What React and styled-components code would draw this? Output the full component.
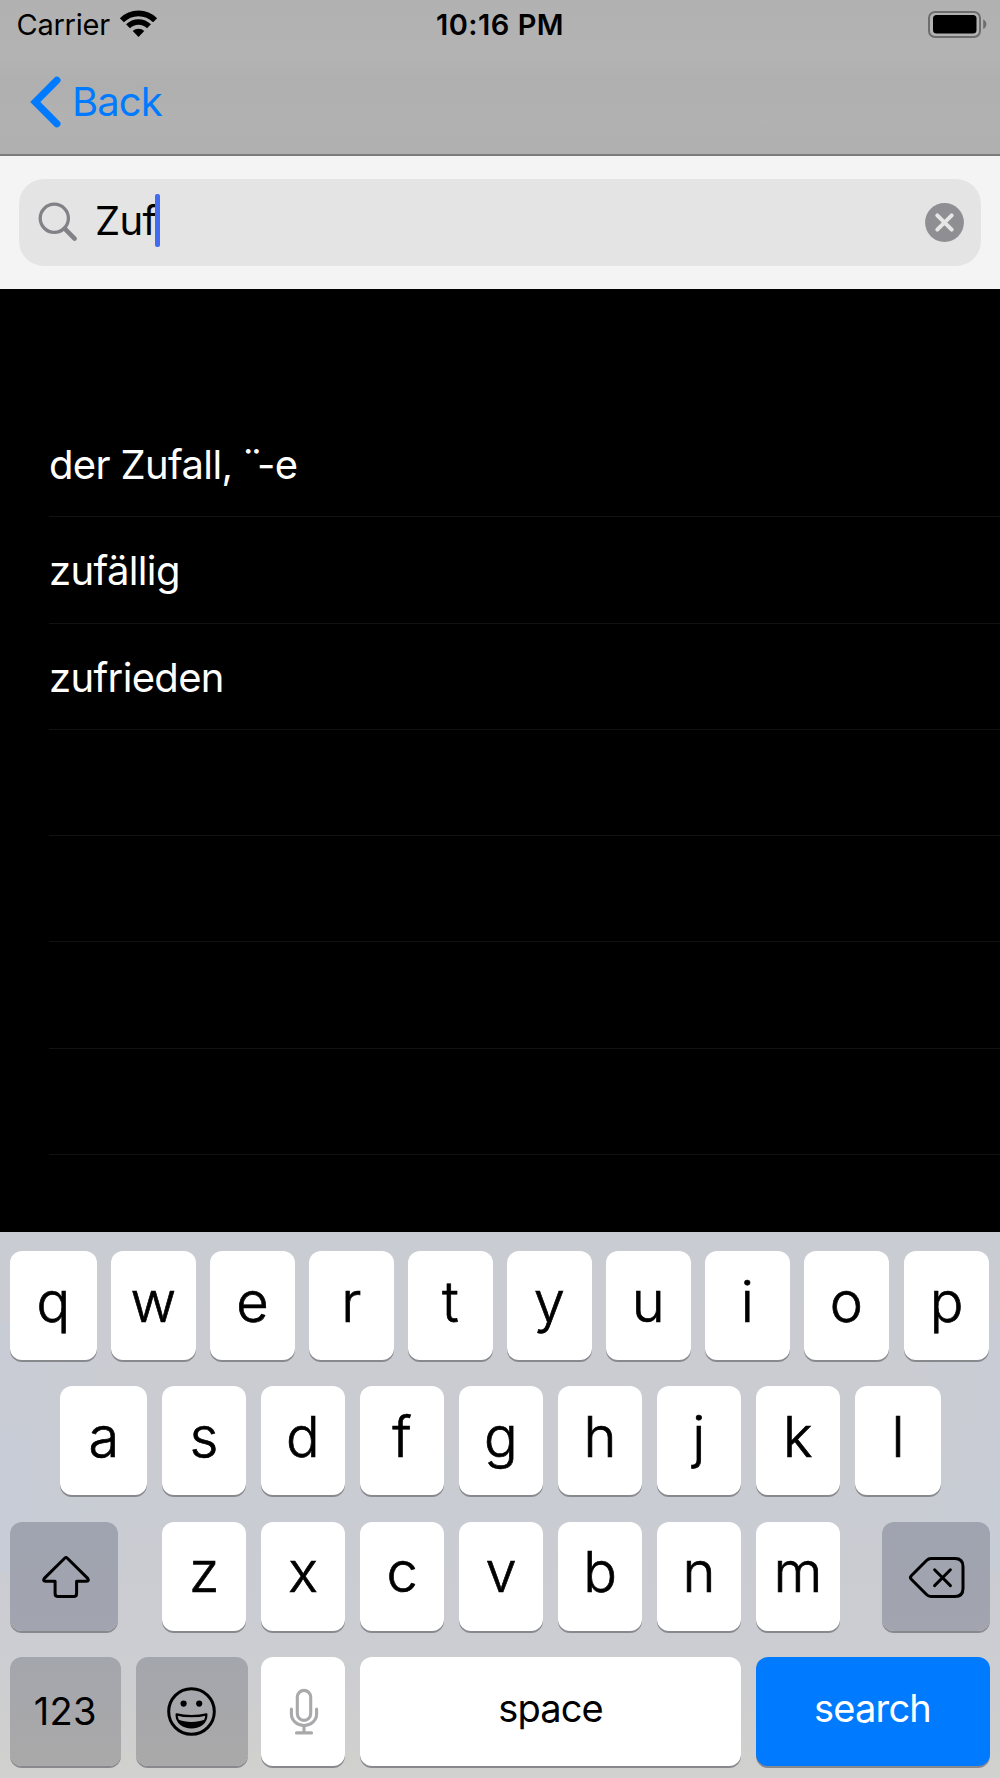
import React from "react";
import styled, { createGlobalStyle } from "styled-components";

const GlobalStyle = createGlobalStyle`
  *, *::before, *::after { box-sizing: border-box; }
  body { margin: 0; background: #000; }
`;

const Screen = styled.div`
  width: 1000px;
  height: 1778px;
  display: flex;
  flex-direction: column;
  overflow: hidden;
  background: #000;
  color: #000;
  font-family: Inter, "Liberation Sans", sans-serif;
  svg { display: block; flex: none; overflow: visible; }
`;

const Text = styled.span`
  display: block;
  white-space: pre;
  font-size: ${(p) => p.$size}px;
  line-height: ${(p) => p.$line || 48}px;
  font-weight: ${(p) => p.$weight || 400};
  letter-spacing: ${(p) => p.$track || 0}px;
  color: ${(p) => p.$color || "#000"};
`;

const Letter = styled(Text)`
  -webkit-text-stroke: 0.7px #000;
`;

const Header = styled.header`
  height: 156px;
  flex: none;
  border-bottom: 2px solid #7b7b7b;
  background: linear-gradient(#b1b1b1 0%, #b3b3b3 38%, #afafaf 55%, #b2b2b2 78%, #afafaf 100%);
`;

const StatusBar = styled.div`
  height: 48px;
  display: grid;
  grid-template-columns: 1fr auto 1fr;
  padding: 0 13px;
`;

const Carrier = styled.div`
  display: flex;
  gap: 10px;
  padding: 1px 0 0 3.5px;
  svg { margin-top: 9px; }
`;

const Clock = styled.div`
  padding-top: 1px;
`;

const Battery = styled.div`
  display: flex;
  justify-content: flex-end;
  padding-top: 11px;
`;

const BackButton = styled.button`
  display: flex;
  align-items: center;
  gap: 11px;
  height: 58px;
  margin: 25px 0 0 29px;
  padding: 0;
  border: 0;
  background: none;
  font: inherit;
`;

const SearchBar = styled.div`
  height: 133px;
  flex: none;
  padding: 23px 19px 0 19px;
  background: #f4f4f4;
`;

const SearchField = styled.div`
  height: 87px;
  display: flex;
  align-items: center;
  padding: 0 17px 0 19px;
  border-radius: 25px;
  background: #e4e4e4;
`;

const Query = styled.div`
  flex: 1;
  display: flex;
  align-items: center;
  padding: 0 0 3px 17px;
`;

const Caret = styled.span`
  width: 5px;
  height: 53px;
  margin: 0 0 2px -2px;
  border-radius: 2px;
  background: #416bf0;
`;

const Results = styled.ul`
  flex: 1;
  min-height: 0;
  margin: 0;
  padding: 122px 0 0 48.5px;
  list-style: none;
  overflow: hidden;
`;

const Result = styled.li`
  height: 106.3px;
  display: flex;
  align-items: center;
  padding: 3px 0 0 0.5px;
  border-bottom: 1px solid #121212;
`;

const Umlaut = styled.span`
  margin-left: -2.5px;
  letter-spacing: -7px;
`;

const Keyboard = styled.div`
  height: 546px;
  flex: none;
  display: flex;
  flex-direction: column;
  gap: 24.3px;
  padding: 19px 10px 0;
  background:
    linear-gradient(90deg, rgba(196, 204, 222, 0.35), rgba(196, 204, 222, 0) 14%, rgba(196, 204, 222, 0) 88%, rgba(196, 204, 222, 0.3)) 0 90px / 100% 250px no-repeat,
    linear-gradient(#c9ccd2 0%, #cbccd1 28%, #c9ccd2 50%, #cccdd2 76%, #cfcfcf 92%, #d1d1cf 100%);
`;

const KeyRow = styled.div`
  height: 111px;
  display: flex;
  gap: 14.3px;
  padding-left: ${(p) => p.$indent || 0}px;
`;

const tones = {
  light: "#fff",
  cool: "linear-gradient(#9fa4b0, #a2a4af)",
  warm: "linear-gradient(#a4a6ad, #aaa9a9)",
  action: "#007aff",
};

const Key = styled.button`
  width: ${(p) => p.$w || 84.7}px;
  height: 109px;
  flex: none;
  display: flex;
  justify-content: center;
  align-items: center;
  margin: 0 0 0 ${(p) => p.$ml || 0}px;
  padding: ${(p) => p.$drop || 0}px 0 ${(p) => p.$lift || 0}px ${(p) => p.$push || 0}px;
  border: 0;
  border-radius: 12px;
  background: ${(p) => tones[p.$tone || "light"]};
  box-shadow: 0 2px 0 #88898d;
  font: inherit;
`;

const letterTop = ["q", "w", "e", "r", "t", "y", "u", "i", "o", "p"];
const letterHome = ["a", "s", "d", "f", "g", "h", "j", "k", "l"];
const letterLow = ["z", "x", "c", "v", "b", "n", "m"];

function Letters({ letters, first, last }) {
  return letters.map((ch, i) => {
    const isLast = i === letters.length - 1;
    return (
      <Key
        key={ch}
        $w={i === 0 ? first : isLast ? last : undefined}
        $ml={isLast && last ? 0.8 : 0}
        $lift={8}
      >
        <Letter $size={56} $line={70} $weight={300}>{ch}</Letter>
      </Key>
    );
  });
}

function WifiIcon() {
  return (
    <svg width="37" height="27" viewBox="0 0 37 27">
      <g fill="none" stroke="#000">
        <path d="M1.9 10.2A23.5 23.5 0 0 1 35.1 10.2" strokeWidth="5.7" />
        <path d="M8 16.3A14.9 14.9 0 0 1 29 16.3" strokeWidth="5.5" />
      </g>
      <path d="M12.7 21A8.3 8.3 0 0 1 24.3 21L18.5 26.9Z" />
    </svg>
  );
}

function BatteryIcon() {
  return (
    <svg width="59" height="27" viewBox="0 0 59 27">
      <rect x="1" y="1" width="51" height="25" rx="6" fill="none" stroke="#6d6d6d" strokeWidth="2" />
      <rect x="5" y="4" width="43.5" height="18.5" rx="3.5" />
      <path d="M55.2 8.5C59.4 10 59.4 16.5 55.2 18Z" fill="#6d6d6d" />
    </svg>
  );
}

function ChevronIcon() {
  return (
    <svg width="32" height="52" viewBox="0 0 32 52">
      <path d="M27.9 4.2L6.3 26L27.9 47.8" fill="none" stroke="#007aff" strokeWidth="7.2" strokeLinecap="round" />
    </svg>
  );
}

function SearchIcon() {
  return (
    <svg width="40" height="40" viewBox="0 0 40 40">
      <g fill="none" stroke="#828286" strokeLinecap="round">
        <circle cx="16.3" cy="15.3" r="14.1" strokeWidth="3.3" />
        <path d="M26.7 25.7L36.6 35.6" strokeWidth="4.6" />
      </g>
    </svg>
  );
}

function ClearIcon() {
  return (
    <svg width="39" height="39" viewBox="0 0 39 39">
      <circle cx="19.5" cy="19.5" r="19.4" fill="#8e8e93" />
      <path d="M12.3 12.3L26.7 26.7M26.7 12.3L12.3 26.7" stroke="#e6e6e6" strokeWidth="4" strokeLinecap="round" />
    </svg>
  );
}

function ShiftIcon() {
  return (
    <svg width="48" height="42" viewBox="0 0 48 42">
      <path
        d="M22.9 2Q24 1 25.1 2L45.7 22.4Q47.5 25.2 44.5 25.2H34.6V37.5Q34.6 40.6 31.5 40.6H16.2Q13.1 40.6 13.1 37.5V25.2H3.5Q.5 25.2 2.3 22.4Z"
        fill="none" stroke="#000" strokeWidth="3" strokeLinejoin="round"
      />
    </svg>
  );
}

function DeleteIcon() {
  return (
    <svg width="56" height="41" viewBox="0 0 56 41">
      <g fill="none" stroke="#000" strokeWidth="3" strokeLinecap="round" strokeLinejoin="round">
        <path d="M22 1.5H46Q54 1.5 54 9.5V31.5Q54 39.5 46 39.5H22Q19.5 39.5 17.5 37.5L2.3 22.2Q.6 20.5 2.3 18.8L17.5 3.5Q19.5 1.5 22 1.5Z" />
        <path d="M25.6 12.8L41.4 28.6M41.4 12.8L25.6 28.6" />
      </g>
    </svg>
  );
}

function SmileIcon() {
  return (
    <svg width="49" height="49" viewBox="0 0 49 49">
      <circle cx="24.5" cy="24.5" r="22.8" fill="none" stroke="#000" strokeWidth="3" />
      <circle cx="16.6" cy="16.6" r="3.1" />
      <circle cx="32.2" cy="16.6" r="3.1" />
      <path d="M9.6 27.4C18 29.8 31 29.8 39.4 27.4C39.4 36 32.500 40.300 24.500 40.300C16.500 40.300 9.600 36 9.600 27.400Z" fill="none" stroke="#000" strokeWidth="2.200" strokeLinejoin="round" />
      <path d="M11 32.500C18.500 35.700 30.500 35.700 38 32.500C35.500 38.300 30.500 41 24.500 41C18.500 41 13.500 38.300 11 32.500Z" />
    </svg>
  );
}

function MicIcon() {
  return (
    <svg width="28" height="46" viewBox="0 0 28 46">
      <g fill="none" stroke="#a9a9ab" strokeWidth="3.1" strokeLinecap="round">
        <rect x="7.3" y="1.4" width="13.4" height="30" rx="6.7" />
        <path d="M1.4 20V25A12.6 11.6 0 0 0 26.6 25V20M14 37V43.8M6.5 43.9H21.5" />
      </g>
    </svg>
  );
}

const entries = [
  { label: <>der Zufall, <Umlaut>¨</Umlaut>-e</> },
  { label: "zufällig" },
  { label: "zufrieden" },
  {},
  {},
  {},
  {},
  {},
];

export default function App() {
  return (
    <Screen>
      <GlobalStyle />
      <Header>
        <StatusBar>
          <Carrier>
            <Text $size={29} $track={-0.25}>Carrier</Text>
            <WifiIcon />
          </Carrier>
          <Clock>
            <Text $size={29} $weight={600} $track={0.5}>10:16 PM</Text>
          </Clock>
          <Battery>
            <BatteryIcon />
          </Battery>
        </StatusBar>
        <BackButton>
          <ChevronIcon />
          <Text $size={40} $track={-0.9} $color="#007aff">Back</Text>
        </BackButton>
      </Header>
      <SearchBar>
        <SearchField>
          <SearchIcon />
          <Query>
            <Text $size={40} $track={-0.7}>Zuf</Text>
            <Caret />
          </Query>
          <ClearIcon />
        </SearchField>
      </SearchBar>
      <Results>
        {entries.map((entry, i) => (
          <Result key={i}>
            <Text $size={40} $track={-0.65} $color="#fff">{entry.label}</Text>
          </Result>
        ))}
      </Results>
      <Keyboard>
        <KeyRow>
          <Letters letters={letterTop} first={86.8} last={85.7} />
        </KeyRow>
        <KeyRow $indent={50.3}>
          <Letters letters={letterHome} first={87} last={85.7} />
        </KeyRow>
        <KeyRow>
          <Key $w={108} $tone="cool" $drop={2.6} $push={3}><ShiftIcon /></Key>
          <Key $ml={29.5} $lift={8}>
            <Letter $size={56} $line={70} $weight={300}>{letterLow[0]}</Letter>
          </Key>
          <Letters letters={letterLow.slice(1)} />
          <Key $w={108} $ml={27.3} $tone="cool" $drop={2.4} $push={1.5}><DeleteIcon /></Key>
        </KeyRow>
        <KeyRow>
          <Key $w={110.7} $tone="warm">
            <Text $size={38} $track={0.4}>123</Text>
          </Key>
          <Key $w={111.7} $ml={1} $tone="warm"><SmileIcon /></Key>
          <Key $ml={-1.2} $drop={2} $push={1.2}><MicIcon /></Key>
          <Key $w={381.5} $lift={7.5}>
            <Text $size={38} $track={-0.9}>space</Text>
          </Key>
          <Key $w={234} $lift={7.5} $tone="action">
            <Text $size={38} $track={-0.8} $color="#fff">search</Text>
          </Key>
        </KeyRow>
      </Keyboard>
    </Screen>
  );
}
